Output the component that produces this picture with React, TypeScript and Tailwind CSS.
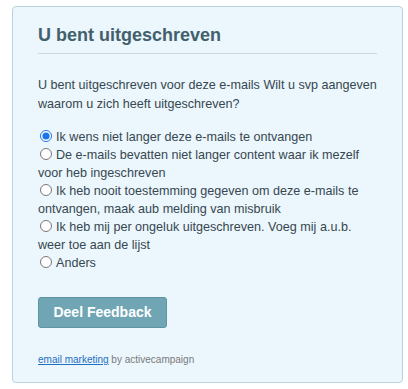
import React from "react";

const options = [
  "Ik wens niet langer deze e-mails te ontvangen",
  "De e-mails bevatten niet langer content waar ik mezelf voor heb ingeschreven",
  "Ik heb nooit toestemming gegeven om deze e-mails te ontvangen, maak aub melding van misbruik",
  "Ik heb mij per ongeluk uitgeschreven. Voeg mij a.u.b. weer toe aan de lijst",
  "Anders",
];

export default function App() {
  return (
    <div className="pt-[6px] pl-[12px] bg-white min-h-[389px]" style={{ fontFamily: '"Liberation Sans", Arial, sans-serif' }}>
      <div className="w-[391px] h-[377px] border border-[#b9d4dd] rounded-[4px] bg-[#ebf6fd] px-[25px] pt-[16px]">
        <h1 className="text-[18px] leading-[24px] font-bold text-[#42606b]">U bent uitgeschreven</h1>
        <div className="mt-[6px] h-px bg-[#cdd9de]" />
        <p className="mt-[22px] text-[12.6px] leading-[19px] text-[#37474f]">
          U bent uitgeschreven voor deze e-mails Wilt u svp aangeven waarom u zich heeft uitgeschreven?
        </p>
        <div className="mt-[14px] text-[12.6px] leading-[18px] text-[#37474f]">
          {options.map((o, i) => (
            <label key={i} className="block">
              <input
                type="radio"
                name="reason"
                defaultChecked={i === 0}
                className="inline-block align-[-1px] w-[12px] h-[12px] ml-[2px] mr-[4px] accent-[#1b74e8]"
              />
              {o}
            </label>
          ))}
        </div>
        <button className="mt-[25px] w-[129px] h-[31px] rounded-[3px] border border-[#5e95a5] bg-[#70a5b4] text-white text-[14px] font-bold">
          Deel Feedback
        </button>
        <div className="mt-[25px] text-[10px] leading-[14px] text-[#7a7a7a]">
          <a href="#" className="text-[#1f6fc2] underline">email marketing</a> by activecampaign
        </div>
      </div>
    </div>
  );
}
